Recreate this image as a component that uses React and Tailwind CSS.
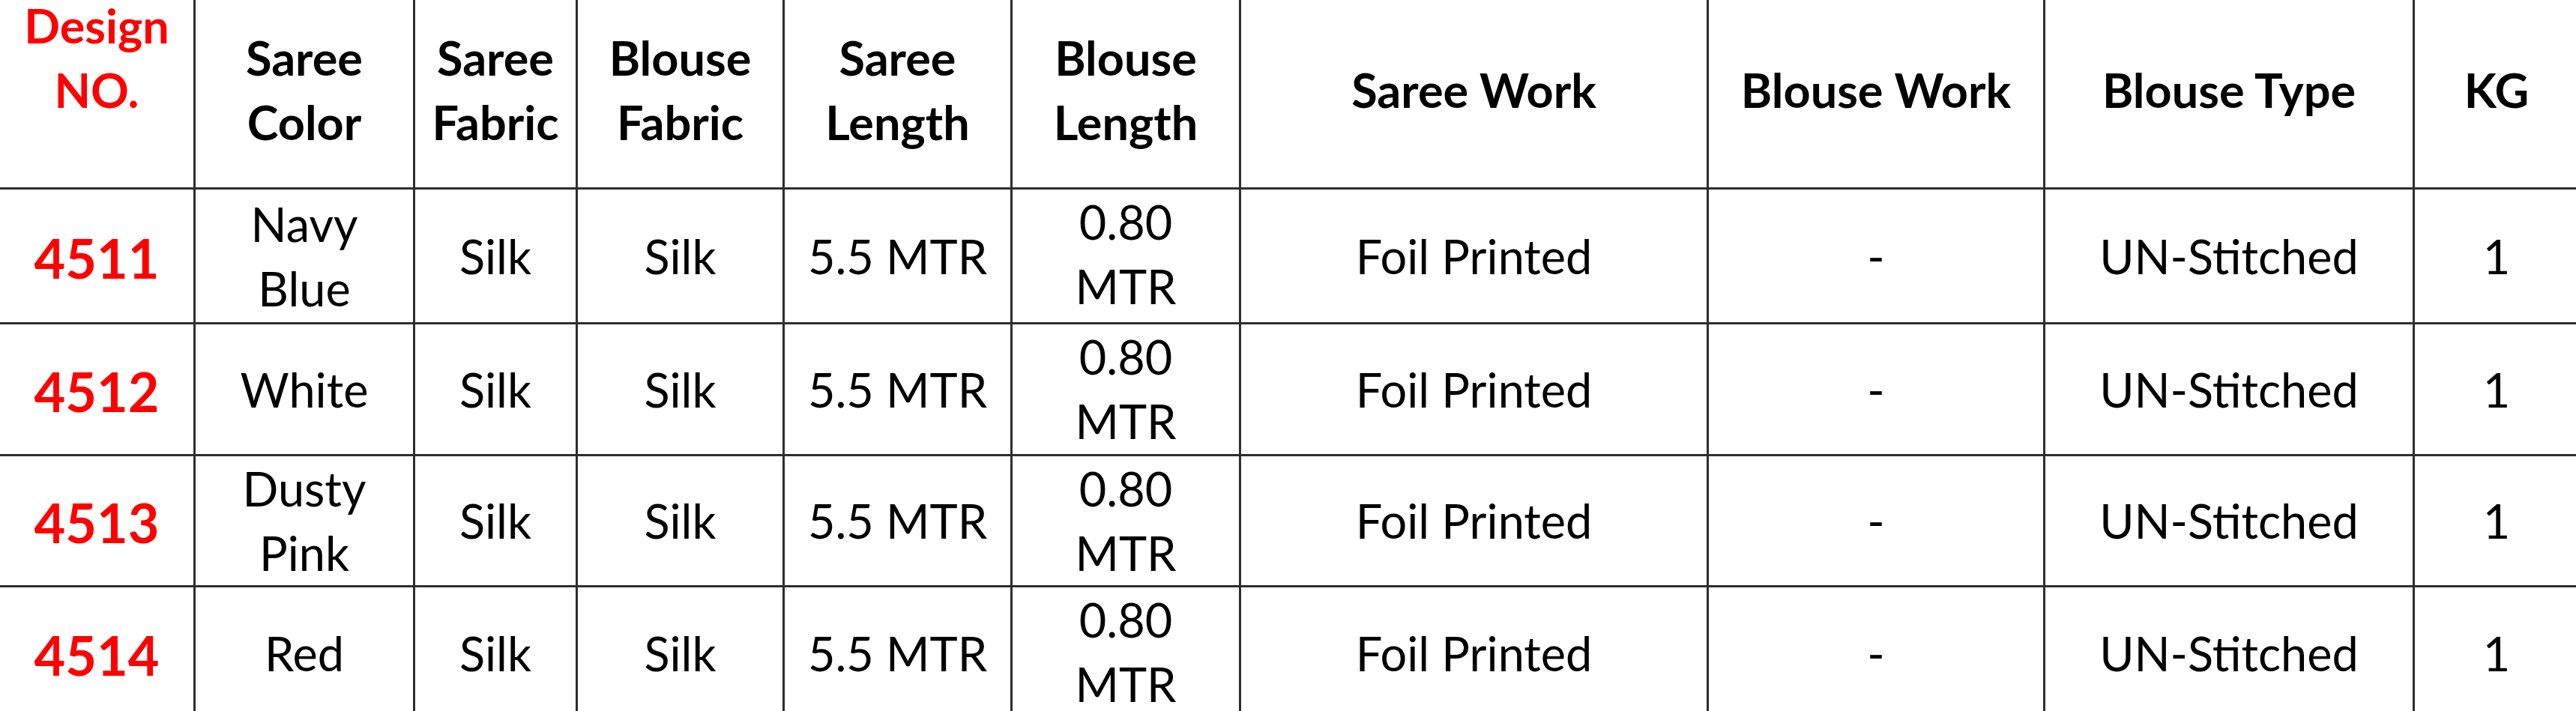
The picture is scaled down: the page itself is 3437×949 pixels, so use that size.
import React from "react";

const rows = [
  { no: "4511", color: ["Navy", "Blue"], h: "h-[177px]" },
  { no: "4512", color: ["White"], h: "h-[173px]" },
  { no: "4513", color: ["Dusty", "Pink"], h: "h-[172px]" },
  { no: "4514", color: ["Red"], h: "h-[175px]" },
];

function Cell({ children, className = "" }) {
  return (
    <div className={`bg-white flex flex-col items-center justify-center text-center overflow-hidden ${className}`}>
      {children}
    </div>
  );
}

function Lines({ items }) {
  return items.map((t, i) => <div key={i}>{t}</div>);
}

export default function App() {
  return (
    <div
      className="w-[3437px] h-[949px] overflow-hidden bg-white text-black"
      style={{ fontFamily: "Lato, 'Open Sans', sans-serif" }}
    >
      <div className="grid grid-cols-[258px_290px_214px_273px_301px_302px_621px_446px_490px_218px] gap-[3px] bg-[#2e2e2e] text-[63px] leading-[86px]">
        {/* header */}
        <div className="bg-white h-[250px] flex flex-col items-center justify-start text-center font-bold text-[#ff0000] overflow-hidden">
          <div className="-mt-[9px]">Design</div>
          <div>NO.</div>
        </div>
        <Cell className="h-[250px] font-bold pb-[10px]"><Lines items={["Saree", "Color"]} /></Cell>
        <Cell className="h-[250px] font-bold pb-[10px]"><Lines items={["Saree", "Fabric"]} /></Cell>
        <Cell className="h-[250px] font-bold pb-[10px]"><Lines items={["Blouse", "Fabric"]} /></Cell>
        <Cell className="h-[250px] font-bold pb-[10px]"><Lines items={["Saree", "Length"]} /></Cell>
        <Cell className="h-[250px] font-bold pb-[10px]"><Lines items={["Blouse", "Length"]} /></Cell>
        <Cell className="h-[250px] font-bold pb-[10px]">Saree Work</Cell>
        <Cell className="h-[250px] font-bold pb-[10px]">Blouse Work</Cell>
        <Cell className="h-[250px] font-bold pb-[10px]">Blouse Type</Cell>
        <Cell className="h-[250px] font-bold pb-[10px]">KG</Cell>

        {rows.map((r) => (
          <React.Fragment key={r.no}>
            <Cell className={`${r.h} font-bold text-[#ff0000] text-[72px] pt-[4px]`}>{r.no}</Cell>
            <Cell className={r.h}><Lines items={r.color} /></Cell>
            <Cell className={r.h}>Silk</Cell>
            <Cell className={r.h}>Silk</Cell>
            <Cell className={r.h}>5.5 MTR</Cell>
            <Cell className={`${r.h} justify-start`}><Lines items={["0.80", "MTR"]} /></Cell>
            <Cell className={r.h}>Foil Printed</Cell>
            <Cell className={r.h}>-</Cell>
            <Cell className={r.h}>UN-Stitched</Cell>
            <Cell className={r.h}>1</Cell>
          </React.Fragment>
        ))}
      </div>
    </div>
  );
}
